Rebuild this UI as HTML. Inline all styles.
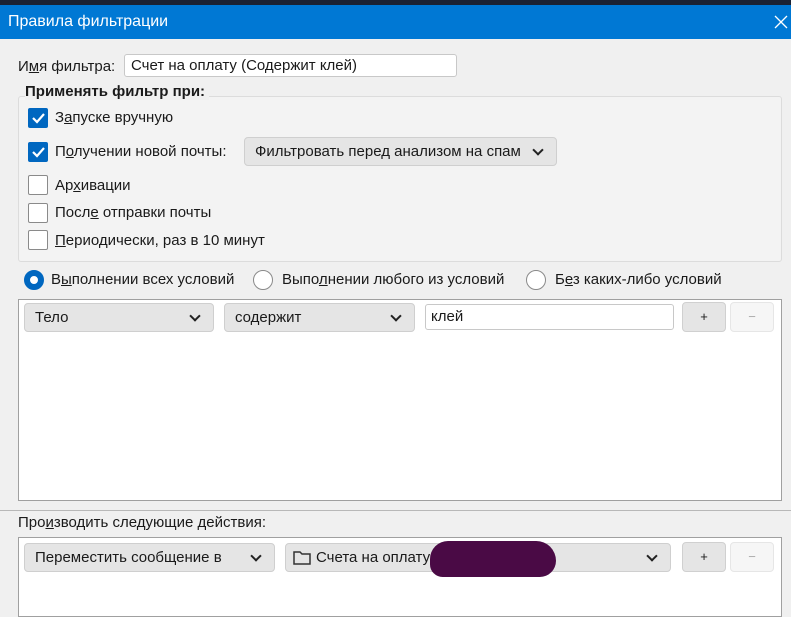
<!DOCTYPE html><html><head><meta charset="utf-8"><style>
*{box-sizing:border-box}
body{margin:0;width:791px;height:611px;overflow:hidden;background:#f0f0f0;font-family:"Liberation Sans",sans-serif;font-size:15px;color:#1a1a1a;position:relative}
.a{position:absolute}
.cb{position:absolute;left:28px;width:20px;height:20px;border:1px solid #8a8a8a;background:#fff;border-radius:2px}
.cb.on{background:#0067c0;border-color:#0067c0}
.lbl{position:absolute;left:55px}
.sel{position:absolute;background:#e5e5e5;border:1px solid #cfcfcf;border-radius:4px;padding:0 10px;line-height:27px}
.sel:after{content:"";position:absolute;right:14px;top:8px;width:6px;height:6px;border-right:2px solid #222;border-bottom:2px solid #222;transform:rotate(45deg)}
.btn{position:absolute;width:44px;height:30px;border:1px solid #d0d0d0;border-radius:4px;text-align:center;line-height:28px;font-size:13px}
.rad{position:absolute;top:270px;width:20px;height:20px;border-radius:50%;border:1px solid #8a8a8a;background:#fff}
</style></head><body>
<div class="a" style="left:0;top:0;width:791px;height:5px;background:#1b2233"></div>
<div class="a" style="left:0;top:5px;width:791px;height:34px;background:#0078d4;color:#fff;font-size:16px;line-height:33px;padding-left:8px">Правила фильтрации
<svg class="a" style="right:3px;top:10px" width="14" height="14"><path d="M1 1l12 12M13 1L1 13" stroke="#fff" stroke-width="1.3"/></svg></div>
<div class="a" style="left:18px;top:58px">И<u>м</u>я фильтра:</div>
<div class="a" style="left:124px;top:54px;width:333px;height:23px;background:#fff;border:1px solid #c8c8c8;border-radius:3px;padding-left:6px;line-height:21px">Счет на оплату (Содержит клей)</div>
<div class="a" style="left:18px;top:96px;width:764px;height:166px;border:1px solid #dcdcdc;background:#f3f3f3;border-radius:3px"></div>
<div class="a" style="left:25px;top:83px;font-weight:bold;background:#f0f0f0;padding-right:4px">Применять фильтр при:</div>
<div class="cb on" style="top:108px"><svg width="18" height="18"><path d="M4 9l4 4 7-8" stroke="#fff" stroke-width="2.2" fill="none"/></svg></div>
<div class="lbl" style="top:109px">З<u>а</u>пуске вручную</div>
<div class="cb on" style="top:142px"><svg width="18" height="18"><path d="M4 9l4 4 7-8" stroke="#fff" stroke-width="2.2" fill="none"/></svg></div>
<div class="lbl" style="top:143px">П<u>о</u>лучении новой почты:</div>
<div class="sel" style="left:244px;top:137px;width:313px;height:29px;padding-right:30px">Фильтровать перед анализом на спам</div>
<div class="cb" style="top:175px"></div><div class="lbl" style="top:177px">Ар<u>х</u>ивации</div>
<div class="cb" style="top:203px"></div><div class="lbl" style="top:204px">Посл<u>е</u> отправки почты</div>
<div class="cb" style="top:230px"></div><div class="lbl" style="top:232px"><u>П</u>ериодически, раз в 10 минут</div>
<div class="rad" style="left:24px;border:6px solid #0067c0"></div>
<div class="a" style="left:51px;top:271px">В<u>ы</u>полнении всех условий</div>
<div class="rad" style="left:253px"></div>
<div class="a" style="left:282px;top:271px">Выпо<u>л</u>нении любого из условий</div>
<div class="rad" style="left:526px"></div>
<div class="a" style="left:555px;top:271px">Б<u>е</u>з каких-либо условий</div>
<div class="a" style="left:18px;top:299px;width:764px;height:202px;background:#fff;border:1px solid #a0a0a0"></div>
<div class="sel" style="left:24px;top:303px;width:190px;height:29px">Тело</div>
<div class="sel" style="left:224px;top:303px;width:191px;height:29px">содержит</div>
<div class="a" style="left:425px;top:304px;width:249px;height:26px;border:1px solid #c8c8c8;border-radius:3px;padding-left:5px;line-height:24px">клей</div>
<div class="btn" style="left:682px;top:302px;background:#e5e5e5">+</div>
<div class="btn" style="left:730px;top:302px;background:#f6f6f6;color:#aaa;border-color:#e6e6e6">−</div>
<div class="a" style="left:0;top:510px;width:791px;height:1px;background:#b8b8b8"></div>
<div class="a" style="left:18px;top:514px">Про<u>и</u>зводить следующие действия:</div>
<div class="a" style="left:18px;top:537px;width:764px;height:80px;background:#fff;border:1px solid #a0a0a0"></div>
<div class="sel" style="left:24px;top:543px;width:251px;height:29px">Переместить сообщение в</div>
<div class="sel" style="left:285px;top:543px;width:386px;height:29px;padding-left:30px">Счета на оплату</div>
<svg class="a" style="left:292px;top:548px" width="20" height="18"><path d="M2 4h6l2 2h8v10H2z" fill="none" stroke="#333" stroke-width="1.5"/></svg>
<div class="a" style="left:430px;top:541px;width:126px;height:36px;background:#4a0a45;border-radius:20px 22px 18px 14px"></div>
<div class="btn" style="left:682px;top:542px;background:#e5e5e5">+</div>
<div class="btn" style="left:730px;top:542px;background:#f6f6f6;color:#aaa;border-color:#e6e6e6">−</div>
</body></html>
